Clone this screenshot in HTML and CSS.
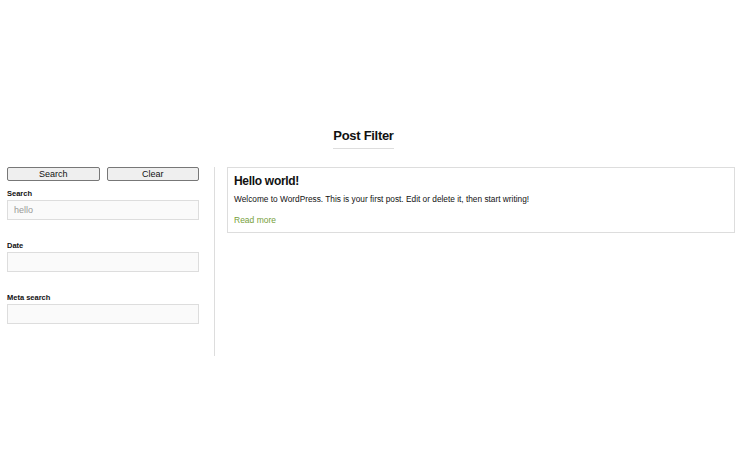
FILE: index.html
```html
<!DOCTYPE html>
<html>
<head>
    <meta charset="utf-8">
    <meta name="viewport" content="width=device-width, initial-scale=1">
    <title>Post Filter</title>
    <link rel="stylesheet" href="styles.css">
</head>
<body>
<article class="page">
    <header class="page-header">
        <h2>Post Filter</h2>
    </header>
    <div class="filter-layout">
        <aside class="filter-form">
            <div class="buttons">
                <button type="button">Search</button>
                <button type="button">Clear</button>
            </div>
            <div class="field">
                <label for="search">Search</label>
                <input type="text" id="search" placeholder="hello">
            </div>
            <div class="field">
                <label for="date">Date</label>
                <input type="text" id="date">
            </div>
            <div class="field">
                <label for="meta">Meta search</label>
                <input type="text" id="meta">
            </div>
        </aside>
        <section class="results">
            <div class="post">
                <h3>Hello world!</h3>
                <p>Welcome to WordPress. This is your first post. Edit or delete it, then start writing!</p>
                <a href="#">Read more</a>
            </div>
        </section>
    </div>
</article>
</body>
</html>
```

FILE: styles.css
```css
html, body {
    padding: 0;
    margin: 0;
}

body {
    background-color: #fff;
    color: #111;
    font-family: "Liberation Sans", Helvetica, Arial, sans-serif;
}

.page {
    padding: 128px 15px 0 7px;
}

.page-header {
    display: flex;
    justify-content: center;
    padding-right: 15px;
}

.page-header h2 {
    border-bottom: 1px solid #ddd;
    font-size: 13px;
    letter-spacing: -0.3px;
    line-height: 16px;
    margin: 0;
    padding-bottom: 4px;
}

.filter-layout {
    display: flex;
    margin-top: 18px;
}

.filter-form {
    border-right: 1px solid #ddd;
    box-sizing: border-box;
    min-height: 189px;
    padding-right: 15px;
    width: 208px;
}

.buttons {
    display: flex;
    gap: 7px;
}

.buttons button {
    background-color: #efefef;
    border: 1px solid #777;
    border-radius: 2px;
    color: #111;
    flex: 1;
    font-family: inherit;
    font-size: 9px;
    height: 14px;
    line-height: 11px;
    padding: 0;
}

.field {
    display: flex;
    flex-direction: column;
    margin-top: 8px;
}

.field + .field {
    margin-top: 21px;
}

.field label {
    font-size: 7.5px;
    font-weight: bold;
    line-height: 10px;
    margin-bottom: 1px;
}

.field input {
    background-color: #fafafa;
    border: 1px solid #ddd;
    box-sizing: border-box;
    font-family: inherit;
    font-size: 9px;
    height: 20px;
    padding: 0 6px;
}

.field input::placeholder {
    color: #999;
}

.results {
    flex: 1;
    padding-left: 12px;
}

.post {
    border: 1px solid #ddd;
    padding: 6px 6px 5px;
}

.post h3 {
    font-size: 12px;
    letter-spacing: -0.3px;
    line-height: 14px;
    margin: 0 0 5px;
}

.post p {
    font-size: 8.3px;
    line-height: 12px;
    margin: 0 0 4px;
}

.post a {
    color: #76a03a;
    font-size: 8.5px;
    line-height: 12px;
    text-decoration: none;
}
```
